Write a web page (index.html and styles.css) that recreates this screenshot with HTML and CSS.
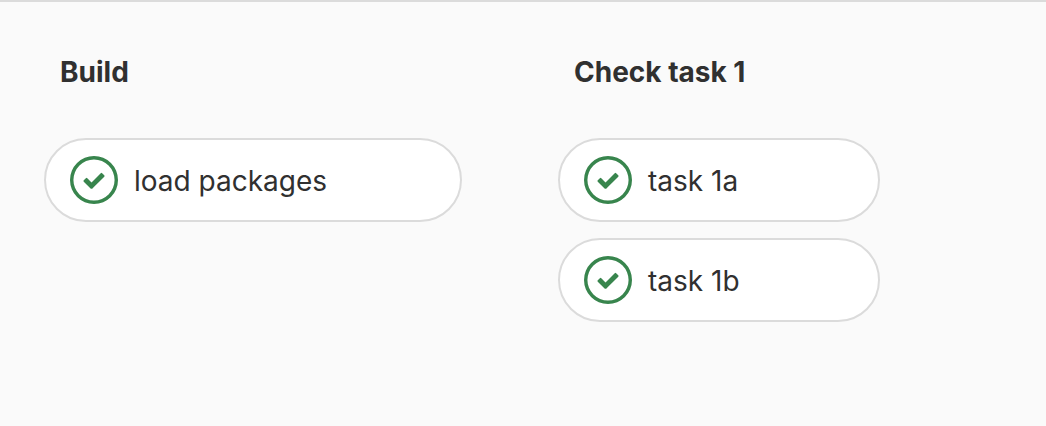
FILE: index.html
```
<!DOCTYPE html>
<html lang="en">
<head>
<meta charset="utf-8">
<title>Pipeline</title>
<link rel="stylesheet" href="styles.css">
</head>
<body>
<svg class="sprite" aria-hidden="true">
  <symbol id="status-success" viewBox="0 0 14 14">
    <path fill-rule="evenodd" d="M0 7a7 7 0 1 1 14 0A7 7 0 0 1 0 7zM1 7a6 6 0 1 0 12 0A6 6 0 0 0 1 7z"/>
    <path d="M6.278 7.697L5.045 6.464a.296.296 0 0 0-.42-.002l-.613.614a.298.298 0 0 0 .002.42l1.91 1.909a.5.5 0 0 0 .703.005l.265-.265L9.997 6.04a.291.291 0 0 0-.009-.408l-.614-.614a.29.29 0 0 0-.408-.009L6.278 7.697z"/>
  </symbol>
</svg>
<main class="pipeline">
  <section class="stage">
    <h2 class="stage-title">Build</h2>
    <ul class="jobs">
      <li><button class="job job-wide" type="button"><svg class="icon" aria-hidden="true"><use href="#status-success"/></svg><span class="job-name">load packages</span></button></li>
    </ul>
  </section>
  <section class="stage">
    <h2 class="stage-title">Check task 1</h2>
    <ul class="jobs">
      <li><button class="job" type="button"><svg class="icon" aria-hidden="true"><use href="#status-success"/></svg><span class="job-name">task 1a</span></button></li>
      <li><button class="job" type="button"><svg class="icon" aria-hidden="true"><use href="#status-success"/></svg><span class="job-name">task 1b</span></button></li>
    </ul>
  </section>
</main>
</body>
</html>
```
FILE: styles.css
```
* { box-sizing: border-box; }

body {
  margin: 0;
  min-height: 100vh;
  border-top: 2px solid #dbdbdb;
  background: #fafafa;
  color: #303030;
  font-family: Inter, "Liberation Sans", sans-serif;
  font-size: 28px;
  line-height: 40px;
}

.sprite { display: none; }

.pipeline {
  display: flex;
  align-items: flex-start;
  gap: 96px;
  padding: 48px 44px;
}

.stage {
  display: flex;
  flex-direction: column;
  gap: 46px;
}

.stage-title {
  margin: 0;
  padding: 2px 16px 0;
  font-size: 28px;
  font-weight: 700;
}

.jobs {
  display: flex;
  flex-direction: column;
  gap: 16px;
  margin: 0;
  padding: 0;
  list-style: none;
}

.job {
  display: flex;
  align-items: center;
  gap: 16px;
  width: 322px;
  padding: 16px 24px;
  border: 2px solid #dbdbdb;
  border-radius: 42px;
  background: #fff;
  color: inherit;
  font: inherit;
  cursor: pointer;
}

.job-wide { width: 418px; }

.job-name { padding-top: 2px; }

.icon {
  flex: none;
  width: 48px;
  height: 48px;
  fill: #38854d;
}
```
